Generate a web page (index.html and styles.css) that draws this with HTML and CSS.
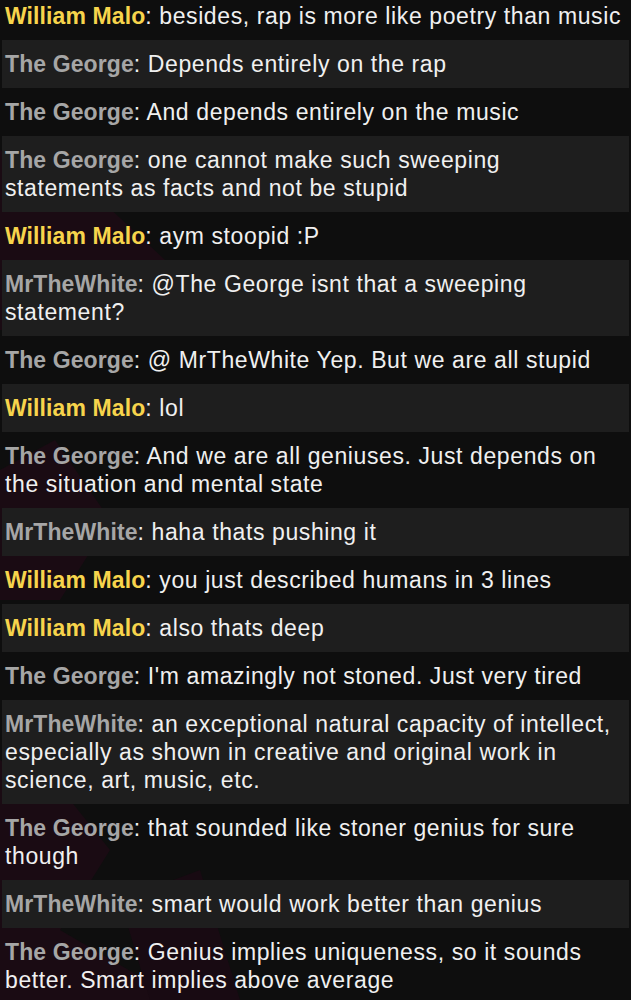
FILE: index.html
```html
<!DOCTYPE html>
<html>
<head>
<meta charset="utf-8">
<link rel="stylesheet" href="styles.css">
</head>
<body>
<div class="bg">
<svg class="deco" width="631" height="1000" viewBox="0 0 631 1000">
  <polygon points="0,150 90,190 165,260 120,330 0,330" fill="#1a0b13"/>
  <polygon points="0,470 55,440 110,520 60,600 0,600" fill="#1a0b13"/>
  <polygon points="0,760 70,800 110,850 60,930 180,1000 0,1000" fill="#1a0b13"/>
  <polygon points="120,900 200,870 240,1000 150,1000" fill="#180a12"/>
</svg>
<ul class="chat">
  <li class="msg"><span class="name gold">William Malo</span>: besides, rap is more like poetry than music</li>
  <li class="msg alt"><span class="name grey">The George</span>: Depends entirely on the rap</li>
  <li class="msg"><span class="name grey">The George</span>: And depends entirely on the music</li>
  <li class="msg alt"><span class="name grey">The George</span>: one cannot make such sweeping statements as facts and not be stupid</li>
  <li class="msg"><span class="name gold">William Malo</span>: aym stoopid :P</li>
  <li class="msg alt"><span class="name grey">MrTheWhite</span>: @The George isnt that a sweeping statement?</li>
  <li class="msg"><span class="name grey">The George</span>: @ MrTheWhite Yep. But we are all stupid</li>
  <li class="msg alt"><span class="name gold">William Malo</span>: lol</li>
  <li class="msg"><span class="name grey">The George</span>: And we are all geniuses. Just depends on the situation and mental state</li>
  <li class="msg alt"><span class="name grey">MrTheWhite</span>: haha thats pushing it</li>
  <li class="msg"><span class="name gold">William Malo</span>: you just described humans in 3 lines</li>
  <li class="msg alt"><span class="name gold">William Malo</span>: also thats deep</li>
  <li class="msg"><span class="name grey">The George</span>: I'm amazingly not stoned. Just very tired</li>
  <li class="msg alt"><span class="name grey">MrTheWhite</span>: an exceptional natural capacity of intellect, especially as shown in creative and original work in science, art, music, etc.</li>
  <li class="msg"><span class="name grey">The George</span>: that sounded like stoner genius for sure though</li>
  <li class="msg alt"><span class="name grey">MrTheWhite</span>: smart would work better than genius</li>
  <li class="msg"><span class="name grey">The George</span>: Genius implies uniqueness, so it sounds better. Smart implies above average</li>
</ul>
</div>
</body>
</html>
```

FILE: styles.css
```css
html, body {
  margin: 0;
  padding: 0;
  background: #0e0e0e;
}
.bg {
  position: relative;
  width: 631px;
  height: 1000px;
  overflow: hidden;
  background: #0e0e0e;
}
.deco {
  position: absolute;
  left: 0;
  top: 0;
}
.chat {
  position: relative;
  list-style: none;
  margin: -8px 0 0 0;
  padding: 0;
  font-family: "Liberation Sans", Arial, sans-serif;
  font-size: 23px;
  line-height: 28px;
  letter-spacing: 0.6px;
  color: #f0f0f0;
}
.msg {
  margin: 0 2px;
  padding: 10px 7px 10px 3px;
}
.msg.alt {
  background: #1e1e1e;
}
.name {
  font-weight: bold;
  letter-spacing: 0.1px;
}
.gold {
  color: #f7d44c;
}
.grey {
  color: #a6a6a6;
}
```
